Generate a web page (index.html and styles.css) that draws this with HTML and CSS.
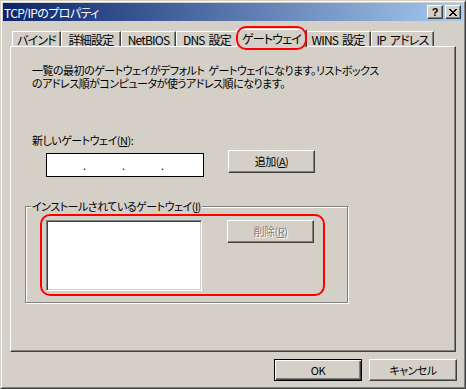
FILE: index.html
```html
<!DOCTYPE html>
<html lang="ja">
<head>
<meta charset="utf-8">
<link rel="stylesheet" href="styles.css">
</head>
<body>
<div class="window">
  <div class="titlebar">
    <span class="title">TCP/IPのプロパティ</span>
    <div class="tb-buttons">
      <span class="tb-btn help">?</span>
      <span class="tb-btn close"><svg width="8" height="7" viewBox="0 0 8 7" shape-rendering="crispEdges"><path fill="#000" d="M0 0h2v1H0zM6 0h2v1H6zM1 1h2v1H1zM5 1h2v1H5zM2 2h4v1H2zM3 3h2v1H3zM2 4h4v1H2zM1 5h2v1H1zM5 5h2v1H5zM0 6h2v1H0zM6 6h2v1H6z"/></svg></span>
    </div>
  </div>
  <div class="tabs">
    <div class="tab t1">バインド</div>
    <div class="tab t2">詳細設定</div>
    <div class="tab t3">NetBIOS</div>
    <div class="tab t4">DNS 設定</div>
    <div class="tab t5 active">ゲートウェイ<span class="mark-tab"></span></div>
    <div class="tab t6">WINS 設定</div>
    <div class="tab t7">IP アドレス</div>
  </div>
  <div class="panel">
    <div class="desc">
      <div class="desc-line">一覧の最初のゲートウェイがデフォルト ゲートウェイになります。リストボックス</div>
      <div class="desc-line">のアドレス順がコンピュータが使うアドレス順になります。</div>
    </div>
    <div class="label-new">新しいゲートウェイ(<u>N</u>):</div>
    <div class="row-new">
      <div class="ip"><span>.</span><span>.</span><span>.</span></div>
      <div class="btn add">追加(<u>A</u>)</div>
    </div>
    <div class="group">
      <div class="group-label">インストールされているゲートウェイ(<u>I</u>)</div>
      <div class="group-row">
        <div class="list"></div>
        <div class="btn disabled">削除(<u>R</u>)</div>
      </div>
      <span class="mark-group"></span>
    </div>
  </div>
  <div class="footer">
    <div class="btn default">OK</div>
    <div class="btn">キャンセル</div>
  </div>
</div>
</body>
</html>
```
FILE: styles.css
```css
* { box-sizing: border-box; }
html, body { margin: 0; padding: 0; }
body {
  background: #d4d0c8;
  font-family: "Noto Sans CJK JP", sans-serif;
  font-size: 11px;
  line-height: 13px;
  letter-spacing: -0.5px;
  color: #000;
  font-feature-settings: "palt";
}
.window {
  width: 466px;
  height: 389px;
  border: 1px solid;
  border-color: #d4d0c8 #404040 #404040 #d4d0c8;
  box-shadow: inset 1px 1px #fff, inset -1px -1px #808080;
  padding: 2px;
  display: flex;
  flex-direction: column;
  background: #d4d0c8;
}
.titlebar {
  height: 18px;
  flex: none;
  background: linear-gradient(to right, #0a246a, #a6caf0);
  display: flex;
  align-items: center;
  justify-content: space-between;
  padding: 0 2px 0 1px;
  color: #fff;
}
.title { font-size: 12px; line-height: 13px; letter-spacing: -0.6px; }
.tb-buttons { display: flex; gap: 2px; }
.tb-btn {
  width: 16px;
  height: 14px;
  background: #d4d0c8;
  border: 1px solid;
  border-color: #fff #404040 #404040 #fff;
  box-shadow: inset -1px -1px #808080;
  display: flex;
  align-items: center;
  justify-content: center;
  color: #000;
}
.help {
  font-family: "Liberation Sans", sans-serif;
  font-weight: bold;
  font-size: 11px;
  line-height: 11px;
  letter-spacing: 0;
  font-feature-settings: normal;
}
.tabs {
  display: flex;
  align-items: flex-end;
  height: 18px;
  flex: none;
  margin: 8px 0 -1px 9px;
  position: relative;
  z-index: 1;
}
.tab {
  height: 15px;
  margin-bottom: 1px;
  border-top: 1px solid #fff;
  border-left: 1px solid #fff;
  border-right: 1px solid #404040;
  box-shadow: inset -1px 0 #808080;
  text-align: center;
  padding-top: 1px;
  white-space: nowrap;
  background: #d4d0c8;
  flex: none;
  font-size: 12px;
  letter-spacing: -0.8px;
  word-spacing: 2px;
}
.t1 { width: 49px; }
.t2 { width: 60px; }
.t3 { width: 55px; }
.t4 { width: 62px; }
.t5 { width: 71px; }
.t6 { width: 66px; }
.t7 { width: 63px; }
.tab.active {
  height: 18px;
  margin: 0 -2px;
  padding-top: 2px;
  position: relative;
  z-index: 2;
}
.mark-tab {
  position: absolute;
  left: -1px;
  top: -4px;
  width: 71px;
  height: 24px;
  border: 2px solid #f00;
  border-radius: 10px;
}
.panel {
  height: 306px;
  flex: none;
  margin: 0 7px;
  border: 1px solid;
  border-color: #fff #404040 #404040 #fff;
  box-shadow: inset -1px -1px #808080;
}
.desc {
  margin: 17px 0 0 21px;
  white-space: nowrap;
  word-spacing: 2px;
}
.desc-line { height: 13px; }
.label-new { margin: 44px 0 0 21px; }
.row-new {
  display: flex;
  align-items: flex-start;
  margin: 3px 0 0 35px;
}
.ip {
  width: 158px;
  height: 24px;
  margin-top: 3px;
  background: #fff;
  border: 1px solid #000;
  display: flex;
  align-items: center;
  padding-left: 35px;
  gap: 34px;
  letter-spacing: 0;
}
.ip span { width: 5px; text-align: center; }
.btn {
  width: 87px;
  height: 23px;
  display: flex;
  align-items: center;
  justify-content: center;
  border: 1px solid;
  border-color: #fff #404040 #404040 #fff;
  box-shadow: inset -1px -1px #808080;
  background: #d4d0c8;
  white-space: nowrap;
  flex: none;
}
.add { margin-left: 24px; }
.group {
  position: relative;
  margin: 29px 0 0 14px;
  width: 323px;
  height: 97px;
  border: 1px solid #808080;
  box-shadow: inset 1px 1px #fff, 1px 1px #fff;
}
.group-label {
  width: fit-content;
  margin: -7px 0 0 5px;
  padding: 0 1px;
  background: #d4d0c8;
}
.group-row {
  display: flex;
  align-items: flex-start;
  margin: 7px 0 0 20px;
}
.list {
  width: 156px;
  height: 71px;
  background: #fff;
  border: 1px solid;
  border-color: #808080 #fff #fff #808080;
  box-shadow: inset 1px 1px #404040, inset -1px -1px #d4d0c8;
}
.group-row .btn { margin-left: 25px; }
.btn.disabled { color: #808080; text-shadow: 1px 1px #fff; }
.mark-group {
  position: absolute;
  left: 14px;
  top: 7px;
  width: 285px;
  height: 82px;
  border: 2px solid #f00;
  border-radius: 10px;
}
.footer {
  display: flex;
  justify-content: flex-end;
  gap: 7px;
  padding-right: 6px;
  margin-top: 7px;
}
.footer .btn { width: 88px; height: 22px; }
.btn.default {
  border-color: #000;
  box-shadow: inset 1px 1px #fff, inset -1px -1px #404040, inset -2px -2px #808080;
}
```
